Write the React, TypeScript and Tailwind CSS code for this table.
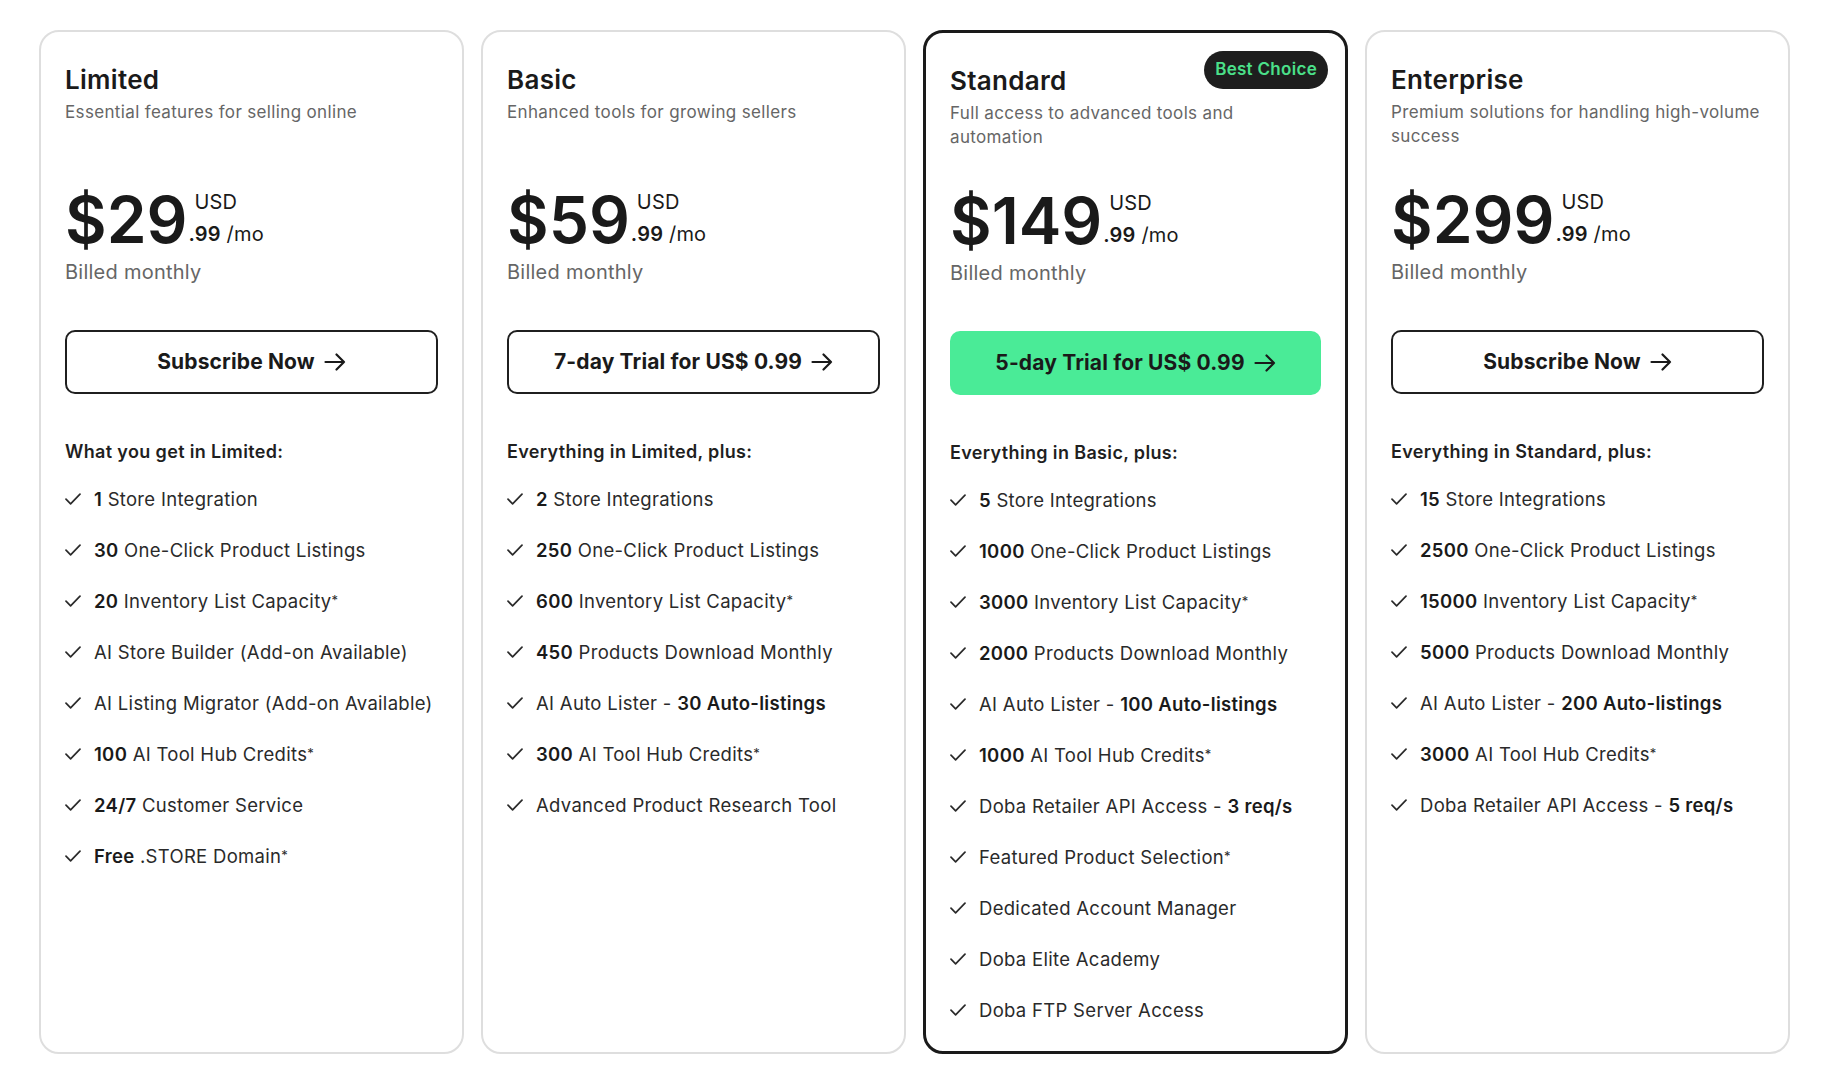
import React from 'react';

type Plan = {
  name: string;
  desc: string;
  price: string;
  cta: string;
  featured?: boolean;
  heading: string;
  items: string[];
};

// "**x**" marks bold parts, a trailing "^" becomes a superscript asterisk
const plans: Plan[] = [
  {
    name: 'Limited',
    desc: 'Essential features for selling online',
    price: '$29',
    cta: 'Subscribe Now',
    heading: 'What you get in Limited:',
    items: [
      '**1** Store Integration',
      '**30** One-Click Product Listings',
      '**20** Inventory List Capacity^',
      'AI Store Builder (Add-on Available)',
      'AI Listing Migrator (Add-on Available)',
      '**100** AI Tool Hub Credits^',
      '**24/7** Customer Service',
      '**Free** .STORE Domain^',
    ],
  },
  {
    name: 'Basic',
    desc: 'Enhanced tools for growing sellers',
    price: '$59',
    cta: '7-day Trial for US$ 0.99',
    heading: 'Everything in Limited, plus:',
    items: [
      '**2** Store Integrations',
      '**250** One-Click Product Listings',
      '**600** Inventory List Capacity^',
      '**450** Products Download Monthly',
      'AI Auto Lister - **30 Auto-listings**',
      '**300** AI Tool Hub Credits^',
      'Advanced Product Research Tool',
    ],
  },
  {
    name: 'Standard',
    desc: 'Full access to advanced tools and automation',
    price: '$149',
    cta: '5-day Trial for US$ 0.99',
    featured: true,
    heading: 'Everything in Basic, plus:',
    items: [
      '**5** Store Integrations',
      '**1000** One-Click Product Listings',
      '**3000** Inventory List Capacity^',
      '**2000** Products Download Monthly',
      'AI Auto Lister - **100 Auto-listings**',
      '**1000** AI Tool Hub Credits^',
      'Doba Retailer API Access - **3 req/s**',
      'Featured Product Selection^',
      'Dedicated Account Manager',
      'Doba Elite Academy',
      'Doba FTP Server Access',
    ],
  },
  {
    name: 'Enterprise',
    desc: 'Premium solutions for handling high-volume success',
    price: '$299',
    cta: 'Subscribe Now',
    heading: 'Everything in Standard, plus:',
    items: [
      '**15** Store Integrations',
      '**2500** One-Click Product Listings',
      '**15000** Inventory List Capacity^',
      '**5000** Products Download Monthly',
      'AI Auto Lister - **200 Auto-listings**',
      '**3000** AI Tool Hub Credits^',
      'Doba Retailer API Access - **5 req/s**',
    ],
  },
];

function CheckMark() {
  return (
    <svg width="16" height="12" viewBox="0 0 16 12" fill="none" className="shrink-0">
      <path d="M1 6.2 L5.6 10.8 L15 1.2" stroke="#2a2a2a" strokeWidth="1.7" strokeLinecap="round" strokeLinejoin="round" />
    </svg>
  );
}

function Arrow() {
  return (
    <svg width="22" height="18" viewBox="0 0 22 18" fill="none" className="shrink-0">
      <path d="M1.5 9 H20 M12.5 1.5 L20 9 L12.5 16.5" stroke="currentColor" strokeWidth="2.2" strokeLinecap="round" strokeLinejoin="round" />
    </svg>
  );
}

function Feature({ text }: { text: string }) {
  const star = text.endsWith('^');
  const body = star ? text.slice(0, -1) : text;
  const parts = body.split('**');
  return (
    <li className="flex items-center gap-[13px] text-[18.5px] leading-7 tracking-[0.3px] text-[#2a2a2a]">
      <CheckMark />
      <span>
        {parts.map((p, i) =>
          i % 2 === 1 ? (
            <b key={i} className="font-semibold text-[#1a1a1a]">{p}</b>
          ) : (
            <span key={i}>{p}</span>
          )
        )}
        {star && <sup className="text-[13px] relative -top-[3px]">*</sup>}
      </span>
    </li>
  );
}

function PlanCard({ plan }: { plan: Plan }) {
  return (
    <div
      className={`relative h-[1024px] rounded-[20px] bg-white px-6 pt-8 flex flex-col ${
        plan.featured ? 'border-[3px] border-[#1a1a1a]' : 'border-2 border-[#dedede]'
      }`}
    >
      {plan.featured && (
        <span className="absolute top-[18px] right-[17px] h-[38px] px-[11px] rounded-full bg-[#1e1e1e] text-[#4be08a] text-[17px] tracking-[0.3px] font-semibold flex items-center">
          Best Choice
        </span>
      )}
      <h2 className="text-[26px] leading-8 tracking-[0.3px] font-semibold text-[#1a1a1a]">{plan.name}</h2>
      <p className="mt-1 min-h-[48px] text-[17px] leading-6 tracking-[0.35px] text-[#666]">{plan.desc}</p>

      <div className="mt-[38px] flex items-end">
        <span className="text-[64px] leading-[64px] font-semibold text-[#1a1a1a]">{plan.price}</span>
        <div className="ml-[1px] mb-[2px] flex flex-col text-[20px] leading-8 tracking-[0.2px] text-[#1a1a1a]">
          <span className="pl-[6px]">USD</span>
          <span>
            <b className="font-semibold">.99</b> /mo
          </span>
        </div>
      </div>
      <p className="mt-[6px] text-[20px] leading-7 tracking-[0.25px] text-[#666]">Billed monthly</p>

      <button
        className={`mt-[44px] h-16 w-full rounded-[10px] flex items-center justify-center gap-[9px] text-[21px] tracking-[0.15px] font-bold text-[#1a1a1a] ${
          plan.featured ? 'bg-[#4aeb97]' : 'border-2 border-[#1f1f1f] bg-white'
        }`}
      >
        {plan.cta}
        <Arrow />
      </button>

      <h3 className="mt-[44px] text-[18px] leading-7 tracking-[0.35px] font-semibold text-[#1f1f1f]">{plan.heading}</h3>
      <ul className="mt-[19px] flex flex-col gap-[23px]">
        {plan.items.map((it) => (
          <Feature key={it} text={it} />
        ))}
      </ul>
    </div>
  );
}

export default function App() {
  return (
    <div className="min-h-screen bg-white pl-[39px] pr-[44px] pt-[30px]" style={{ fontFamily: 'Inter, "Noto Sans", sans-serif' }}>
      <div className="grid grid-cols-4 gap-[17px]">
        {plans.map((p) => (
          <PlanCard key={p.name} plan={p} />
        ))}
      </div>
    </div>
  );
}
